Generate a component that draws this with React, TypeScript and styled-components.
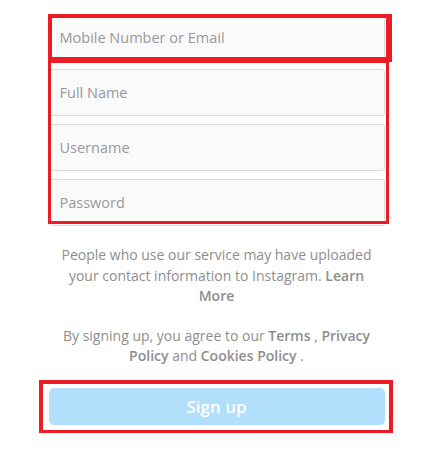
import React from "react"
import styled, { createGlobalStyle } from "styled-components"

const GlobalStyle = createGlobalStyle`
    html, body {
        margin: 0;
        padding: 0;
        background: #fff;
    }
    body {
        font-family: "Open Sans", "Noto Sans", sans-serif;
    }
`

const fields = ["Full Name", "Username", "Password"]

export default function App() {
    return (
        <>
            <GlobalStyle />
            <Form>
                <Marked>
                    <Field placeholder="Mobile Number or Email" />
                    <Highlight $inset="0 -7px -1px -1px" $width="4px 6px 5px 4px" />
                </Marked>

                <Marked>
                    <Fields>
                        {fields.map((label) => (
                            <Field
                                key={label}
                                placeholder={label}
                                type={label === "Password" ? "password" : "text"}
                            />
                        ))}
                    </Fields>
                    <Highlight $inset="-9px -4px 2px -1px" $width="3px" />
                </Marked>

                <Notice>
                    People who use our service may have uploaded your contact information to
                    Instagram. <Strong>Learn More</Strong>
                </Notice>

                <Notice>
                    By signing up, you agree to our <Strong>Terms</Strong> ,{" "}
                    <Strong>Privacy Policy</Strong> and <Strong>Cookies Policy</Strong> .
                </Notice>

                <Marked $top={13}>
                    <SubmitButton disabled>Sign up</SubmitButton>
                    <Highlight $inset="-8px -8px -9px -10px" $width="4px" />
                </Marked>
            </Form>
        </>
    )
}

const Form = styled.form`
    width: 336px;
    margin: 14px auto 0;
    display: flex;
    flex-direction: column;
`

const Marked = styled.div<{ $top?: number }>`
    position: relative;
    display: flex;
    flex-direction: column;
    margin-top: ${(p) => p.$top ?? 0}px;
    margin-bottom: 8px;
`

const Highlight = styled.div<{ $inset: string; $width: string }>`
    position: absolute;
    inset: ${(p) => p.$inset};
    border-style: solid;
    border-color: #ed1c24;
    border-width: ${(p) => p.$width};
    pointer-events: none;
`

const Fields = styled.div`
    display: flex;
    flex-direction: column;
    gap: 8px;
`

const Field = styled.input`
    box-sizing: border-box;
    height: 47px;
    width: 100%;
    padding: 0 10px;
    border: 1px solid #dbdbdb;
    border-radius: 3px;
    background: #fafafa;
    font-family: inherit;
    font-size: 14.5px;
    color: #262626;
    outline: none;

    &::placeholder {
        color: #999;
    }
`

const Notice = styled.p`
    margin: 11px 0 8px;
    padding: 0 10px;
    text-align: center;
    color: #8e8e8e;
    font-size: 14px;
    line-height: 20.5px;
`

const Strong = styled.span`
    font-weight: 600;
`

const SubmitButton = styled.button`
    height: 37px;
    border: none;
    border-radius: 5px;
    background: #b2dffc;
    color: #fff;
    font-family: inherit;
    font-size: 17px;
    font-weight: 600;
`
